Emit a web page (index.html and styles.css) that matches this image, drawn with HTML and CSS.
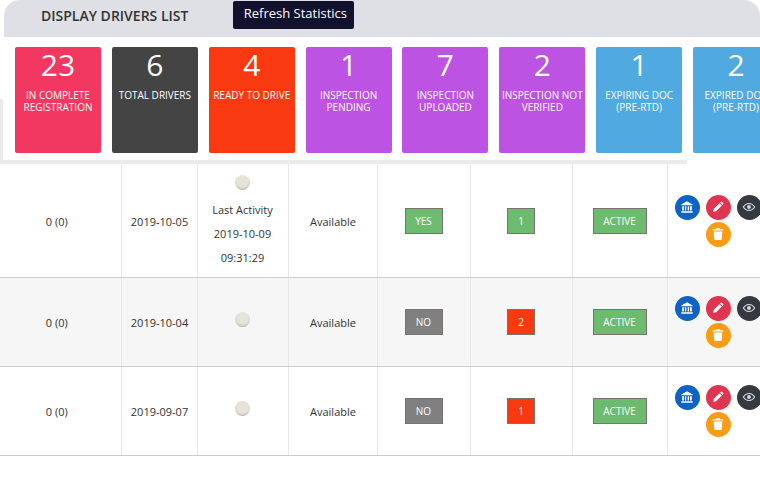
FILE: index.html
```html
<!DOCTYPE html>
<html lang="en">
<head>
    <meta charset="UTF-8">
    <title>Display Drivers List</title>
    <link rel="stylesheet" href="styles.css">
</head>
<body>
    <div class="head-bar">
        <h1 class="head-title">DISPLAY DRIVERS LIST</h1>
        <button class="refresh-btn">Refresh Statistics</button>
    </div>

    <div class="stats-wrap">
        <div class="stats-inner">
            <div class="stats">
                <div class="stat stat-pink"><b>23</b><span>IN COMPLETE REGISTRATION</span></div>
                <div class="stat stat-dark"><b>6</b><span>TOTAL DRIVERS</span></div>
                <div class="stat stat-red"><b>4</b><span>READY TO DRIVE</span></div>
                <div class="stat stat-purple"><b>1</b><span>INSPECTION PENDING</span></div>
                <div class="stat stat-purple"><b>7</b><span>INSPECTION UPLOADED</span></div>
                <div class="stat stat-purple"><b>2</b><span>INSPECTION NOT VERIFIED</span></div>
                <div class="stat stat-blue"><b>1</b><span>EXPIRING DOC (PRE-RTD)</span></div>
                <div class="stat stat-blue"><b>2</b><span>EXPIRED DOC (PRE-RTD)</span></div>
            </div>
        </div>
    </div>

    <table class="drivers">
        <colgroup>
            <col class="c-trips"><col class="c-date"><col class="c-activity"><col class="c-avail">
            <col class="c-yes"><col class="c-count"><col class="c-status"><col class="c-actions">
        </colgroup>
        <tr class="tall">
            <td class="txt">0 (0)</td>
            <td class="txt">2019-10-05</td>
            <td class="activity-full">
                <i class="dot"></i>
                <p>Last Activity</p>
                <p>2019-10-09</p>
                <p>09:31:29</p>
            </td>
            <td class="txt">Available</td>
            <td><span class="tag tag-yes green">YES</span></td>
            <td><span class="tag tag-num green">1</span></td>
            <td><span class="tag tag-active green">ACTIVE</span></td>
            <td>
                <div class="actions">
                    <a class="act act-blue"><svg viewBox="0 0 16 16"><use href="#bank"/></svg></a>
                    <a class="act act-red"><svg viewBox="0 0 16 16"><use href="#pen"/></svg></a>
                    <a class="act act-dark"><svg viewBox="0 0 16 16"><use href="#eye"/></svg></a>
                    <a class="act act-orange"><svg viewBox="0 0 16 16"><use href="#bin"/></svg></a>
                </div>
            </td>
        </tr>
        <tr class="alt">
            <td class="txt">0 (0)</td>
            <td class="txt">2019-10-04</td>
            <td><i class="dot"></i></td>
            <td class="txt">Available</td>
            <td><span class="tag tag-yes grey">NO</span></td>
            <td><span class="tag tag-num red">2</span></td>
            <td><span class="tag tag-active green">ACTIVE</span></td>
            <td>
                <div class="actions">
                    <a class="act act-blue"><svg viewBox="0 0 16 16"><use href="#bank"/></svg></a>
                    <a class="act act-red"><svg viewBox="0 0 16 16"><use href="#pen"/></svg></a>
                    <a class="act act-dark"><svg viewBox="0 0 16 16"><use href="#eye"/></svg></a>
                    <a class="act act-orange"><svg viewBox="0 0 16 16"><use href="#bin"/></svg></a>
                </div>
            </td>
        </tr>
        <tr>
            <td class="txt">0 (0)</td>
            <td class="txt">2019-09-07</td>
            <td><i class="dot"></i></td>
            <td class="txt">Available</td>
            <td><span class="tag tag-yes grey">NO</span></td>
            <td><span class="tag tag-num red">1</span></td>
            <td><span class="tag tag-active green">ACTIVE</span></td>
            <td>
                <div class="actions">
                    <a class="act act-blue"><svg viewBox="0 0 16 16"><use href="#bank"/></svg></a>
                    <a class="act act-red"><svg viewBox="0 0 16 16"><use href="#pen"/></svg></a>
                    <a class="act act-dark"><svg viewBox="0 0 16 16"><use href="#eye"/></svg></a>
                    <a class="act act-orange"><svg viewBox="0 0 16 16"><use href="#bin"/></svg></a>
                </div>
            </td>
        </tr>
    </table>

    <svg class="icon-defs" width="0" height="0">
        <symbol id="bank" viewBox="0 0 16 16">
            <path fill="#fff" d="M8 1.500 14.500 5v1h-13V5zM2.500 7h2v5h-2zM5.600 7h1.600v5H5.600zM8.800 7h1.600v5H8.800zM11.500 7h2v5h-2zM1.500 12.800h13v1.700h-13z"/>
        </symbol>
        <symbol id="pen" viewBox="0 0 16 16">
            <path fill="#fff" d="M2.500 13.500l.7-3.400 6.400-6.400 2.700 2.700-6.400 6.400zM10.400 3l1-1a.8.8 0 0 1 1.100 0l1.500 1.500a.8.8 0 0 1 0 1.100l-1 1z"/>
        </symbol>
        <symbol id="eye" viewBox="0 0 16 16">
            <path fill="#d8d9db" fill-rule="evenodd" d="M8 3.500c3.200 0 5.800 2 7.200 4.500C13.800 10.500 11.200 12.500 8 12.500S2.200 10.500.8 8C2.200 5.500 4.800 3.500 8 3.500zM8 4.600C5.800 4.600 3.800 6 2.300 8c1.500 2 3.500 3.400 5.700 3.400s4.200-1.400 5.700-3.400C12.200 6 10.200 4.600 8 4.600zM8 5.800a2.200 2.200 0 1 1 0 4.400 2.200 2.200 0 0 1 0-4.400z"/>
        </symbol>
        <symbol id="bin" viewBox="0 0 16 16">
            <path fill="#fff" d="M6 1.500h4l.6 1H14v1.600H2V2.500h3.400zM3 5h10l-.7 9a1 1 0 0 1-1 .9H4.700a1 1 0 0 1-1-.9z"/>
        </symbol>
    </svg>
</body>
</html>
```

FILE: styles.css
```css
body {
    margin: 0;
    height: 500px;
    overflow: hidden;
    background: #fff;
    font-family: "Open Sans", "Liberation Sans", sans-serif;
    color: #333;
}

.head-bar {
    margin-left: 4px;
    height: 37px;
    background: #dee0e5;
    border-radius: 16px 16px 0 0;
    display: flex;
    align-items: flex-start;
}

.head-title {
    margin: 7px 45px 0 37px;
    font-size: 14px;
    line-height: 18px;
    font-weight: 600;
    color: #333;
}

.refresh-btn {
    margin-top: 1px;
    width: 121px;
    height: 28px;
    padding: 0 0 4px 3px;
    border: none;
    border-radius: 2px;
    background: #12122f;
    color: #fff;
    font-family: inherit;
    font-size: 13px;
}

/* grey edge on the left and below, starts part way down the cards */
.stats-wrap {
    width: 687px;
    box-sizing: border-box;
    padding: 0 0 4px 3px;
    background: linear-gradient(#fff 62px, #ebebeb 62px);
}

.stats-inner {
    height: 123px;
    box-sizing: border-box;
    padding-top: 10px;
    background: #fff;
}

.stats {
    display: flex;
    gap: 10.860px;
    padding-left: 12px;
}

.stat {
    flex: 0 0 86px;
    height: 106px;
    border-radius: 2px;
    color: #fff;
    text-align: center;
}

.stat b {
    display: block;
    font-weight: 400;
    font-size: 30px;
    line-height: 36px;
}

.stat span {
    display: block;
    margin-top: 6px;
    font-size: 10px;
    line-height: 12px;
}

.stat-pink { background: #f23860; }
.stat-dark { background: #444; }
.stat-red { background: #f93a10; }
.stat-purple { background: #bc53e3; }
.stat-blue { background: #50a9df; }

.drivers {
    width: 777px;
    margin-left: -8px;
    border-collapse: collapse;
    table-layout: fixed;
    font-size: 11px;
    color: #333;
}

.c-trips { width: 129px; }
.c-date { width: 76px; }
.c-activity { width: 91px; }
.c-avail { width: 89px; }
.c-yes { width: 93px; }
.c-count { width: 102px; }
.c-status { width: 95px; }
.c-actions { width: 102px; }

.drivers tr { height: 89px; }
.drivers tr.tall { height: 113px; }

.drivers td {
    padding: 0;
    text-align: center;
    vertical-align: middle;
    border-left: 1px solid #e8e8e8;
    border-bottom: 1px solid #ccc;
}

.drivers td:first-child { border-left: none; }
.drivers .tall td { padding-top: 1px; }
.drivers td.txt { padding: 2px 0 0 1px; }
.drivers .tall td.txt { padding-top: 3px; }
.alt td { background: #f6f6f6; }

.drivers .tall .activity-full { padding-top: 4px; }
.activity-full p { margin: 0; line-height: 24px; }
.activity-full .dot { margin-bottom: 8px; }

.dot {
    display: block;
    width: 15px;
    height: 15px;
    margin: 0 auto 4px;
    border-radius: 50%;
    background: radial-gradient(circle at 50% 38%, #e6e4d8 48%, #d2d0c4 68%, #8a8982 86%, #5f5e59 100%);
}

.tag {
    display: inline-block;
    vertical-align: middle;
    box-sizing: border-box;
    height: 26px;
    line-height: 24px;
    border: 1px solid #7a7270;
    color: #fff;
    font-size: 10px;
}

.tag-yes { width: 38px; }
.tag-num { width: 28px; }
.tag-active { width: 54px; }
.green { background: #6cbb6f; }
.grey { background: #808080; }
.red { background: #f93a10; }

.actions {
    width: 87px;
    margin: 0 auto;
    display: flex;
    flex-wrap: wrap;
    justify-content: center;
    gap: 2px 6px;
}

.act {
    width: 25px;
    height: 25px;
    border-radius: 50%;
    display: flex;
    align-items: center;
    justify-content: center;
}

.act svg { width: 14px; height: 14px; }
.act-blue { background: #0e63c4; }
.act-red { background: #e03550; }
.act-dark { background: #343a40; }
.act-orange { background: #f89c14; }

.icon-defs { position: absolute; }
```
